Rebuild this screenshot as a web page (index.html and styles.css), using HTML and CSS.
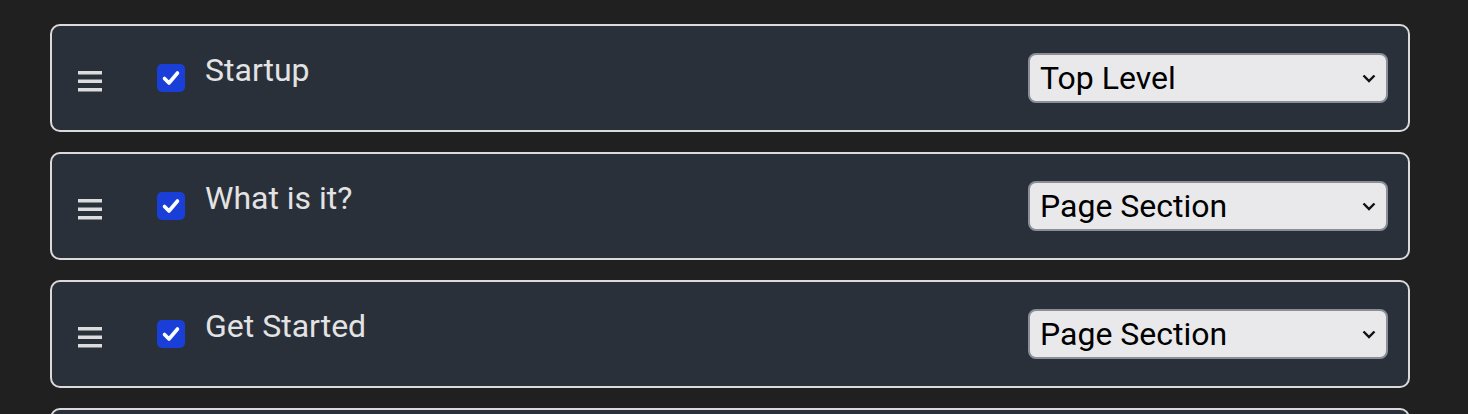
FILE: index.html
```html
<!DOCTYPE html>
<html lang="en">
<head>
<meta charset="utf-8">
<title>Sections</title>
<link rel="stylesheet" href="styles.css">
</head>
<body>
<div class="list">
  <div class="card">
    <svg class="handle" width="24" height="21" viewBox="0 0 24 21"><rect x="0" y="0" width="24" height="3.5" fill="#dcdcdc"/><rect x="0" y="8.5" width="24" height="3.5" fill="#dcdcdc"/><rect x="0" y="17" width="24" height="3.5" fill="#dcdcdc"/></svg>
    <span class="check"><svg width="28" height="28" viewBox="0 0 28 28"><path d="M7.5 14.5 L12 19 L20.5 9" fill="none" stroke="#fff" stroke-width="3.6" stroke-linecap="round" stroke-linejoin="round"/></svg></span>
    <span class="title">Startup</span>
    <div class="select-wrap">
      <select class="level"><option>Top Level</option><option>Page Section</option></select>
      <svg class="chev" width="14" height="9" viewBox="0 0 14 9"><path d="M1.5 1.5 L7 7 L12.5 1.5" fill="none" stroke="#111" stroke-width="2.4"/></svg>
    </div>
  </div>
  <div class="card">
    <svg class="handle" width="24" height="21" viewBox="0 0 24 21"><rect x="0" y="0" width="24" height="3.5" fill="#dcdcdc"/><rect x="0" y="8.5" width="24" height="3.5" fill="#dcdcdc"/><rect x="0" y="17" width="24" height="3.5" fill="#dcdcdc"/></svg>
    <span class="check"><svg width="28" height="28" viewBox="0 0 28 28"><path d="M7.5 14.5 L12 19 L20.5 9" fill="none" stroke="#fff" stroke-width="3.6" stroke-linecap="round" stroke-linejoin="round"/></svg></span>
    <span class="title">What is it?</span>
    <div class="select-wrap">
      <select class="level"><option>Page Section</option><option>Top Level</option></select>
      <svg class="chev" width="14" height="9" viewBox="0 0 14 9"><path d="M1.5 1.5 L7 7 L12.5 1.5" fill="none" stroke="#111" stroke-width="2.4"/></svg>
    </div>
  </div>
  <div class="card">
    <svg class="handle" width="24" height="21" viewBox="0 0 24 21"><rect x="0" y="0" width="24" height="3.5" fill="#dcdcdc"/><rect x="0" y="8.5" width="24" height="3.5" fill="#dcdcdc"/><rect x="0" y="17" width="24" height="3.5" fill="#dcdcdc"/></svg>
    <span class="check"><svg width="28" height="28" viewBox="0 0 28 28"><path d="M7.5 14.5 L12 19 L20.5 9" fill="none" stroke="#fff" stroke-width="3.6" stroke-linecap="round" stroke-linejoin="round"/></svg></span>
    <span class="title">Get Started</span>
    <div class="select-wrap">
      <select class="level"><option>Page Section</option><option>Top Level</option></select>
      <svg class="chev" width="14" height="9" viewBox="0 0 14 9"><path d="M1.5 1.5 L7 7 L12.5 1.5" fill="none" stroke="#111" stroke-width="2.4"/></svg>
    </div>
  </div>
  <div class="card"></div>
</div>
</body>
</html>
```
FILE: styles.css
```css
html, body {
  margin: 0;
  background: #202020;
}
body {
  padding: 24px 58px 0 50px;
  font-family: Roboto, "Liberation Sans", sans-serif;
  overflow: hidden;
}
.list {
  display: flex;
  flex-direction: column;
  gap: 20px;
}
.card {
  box-sizing: border-box;
  height: 108px;
  border: 2px solid #dadada;
  border-radius: 10px;
  background: #29303a;
  display: flex;
  align-items: center;
  padding: 0 20px 0 26px;
}
.handle {
  flex: none;
  margin-top: 7px;
}
.check {
  flex: none;
  width: 28px;
  height: 28px;
  margin-left: 55px;
  border-radius: 5px;
  background: #1a3fd9;
  display: flex;
}
.title {
  align-self: flex-start;
  margin-top: 25px;
  margin-left: 20px;
  font-size: 32px;
  color: #e3e3e3;
  line-height: normal;
}
.select-wrap {
  margin-left: auto;
  position: relative;
  width: 360px;
  height: 50px;
}
.level {
  appearance: none;
  -webkit-appearance: none;
  box-sizing: border-box;
  width: 100%;
  height: 100%;
  border: 2px solid #8b8e96;
  border-radius: 8px;
  background: #e9e9eb;
  color: #000;
  font-family: Roboto, "Liberation Sans", sans-serif;
  font-size: 32px;
  padding: 0 40px 0 10px;
  margin: 0;
}
.chev {
  position: absolute;
  right: 12px;
  top: 21px;
  pointer-events: none;
}
```
